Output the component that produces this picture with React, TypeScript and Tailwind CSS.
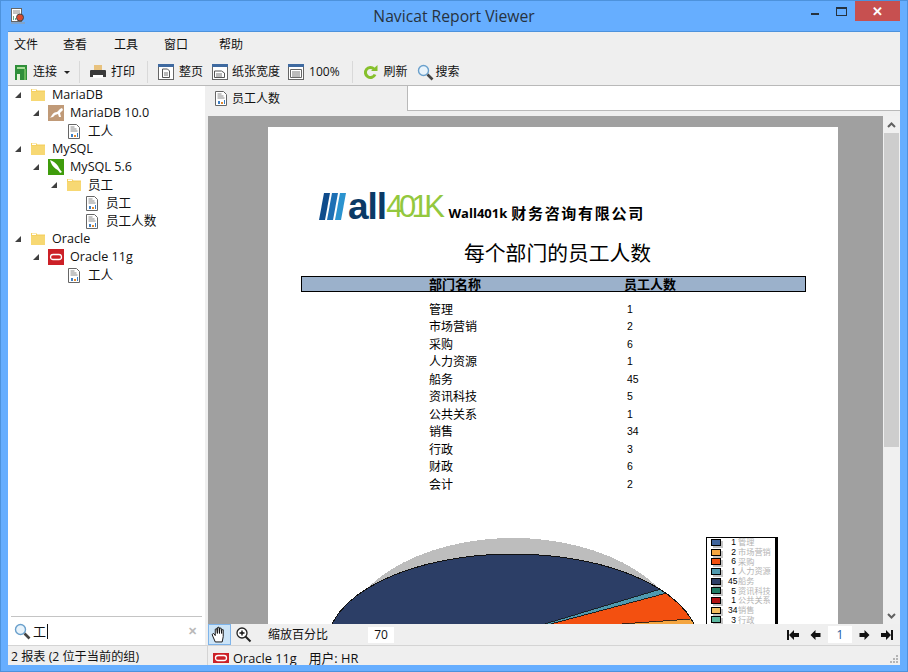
import React from "react";

const FONT = "[font-family:'Open_Sans','Noto_Sans_CJK_SC',sans-serif]";

type Kind = "folder" | "maria" | "mysql" | "oracle" | "report";

const tree: { label: string; level: number; kind: Kind; arrow?: boolean }[] = [
  { label: "MariaDB", level: 0, kind: "folder", arrow: true },
  { label: "MariaDB 10.0", level: 1, kind: "maria", arrow: true },
  { label: "工人", level: 2, kind: "report" },
  { label: "MySQL", level: 0, kind: "folder", arrow: true },
  { label: "MySQL 5.6", level: 1, kind: "mysql", arrow: true },
  { label: "员工", level: 2, kind: "folder", arrow: true },
  { label: "员工", level: 3, kind: "report" },
  { label: "员工人数", level: 3, kind: "report" },
  { label: "Oracle", level: 0, kind: "folder", arrow: true },
  { label: "Oracle 11g", level: 1, kind: "oracle", arrow: true },
  { label: "工人", level: 2, kind: "report" },
];

const rows = [
  ["管理", "1"],
  ["市场营销", "2"],
  ["采购", "6"],
  ["人力资源", "1"],
  ["船务", "45"],
  ["资讯科技", "5"],
  ["公共关系", "1"],
  ["销售", "34"],
  ["行政", "3"],
  ["财政", "6"],
  ["会计", "2"],
];

const legend = [
  ["bg-[#3f649c]", "1", "管理"],
  ["bg-[#f4a540]", "2", "市场营销"],
  ["bg-[#f35010]", "6", "采购"],
  ["bg-[#4f9ab0]", "1", "人力资源"],
  ["bg-[#2c3e66]", "45", "船务"],
  ["bg-[#1d7a62]", "5", "资讯科技"],
  ["bg-[#b01010]", "1", "公共关系"],
  ["bg-[#f3bd60]", "34", "销售"],
  ["bg-[#5cb8a0]", "3", "行政"],
];

function Folder() {
  return (
    <svg width="16" height="14" viewBox="0 0 16 14">
      <path d="M1 1h5l1.500 1.500H15V13H1z" fill="#f5d163" />
      <path d="M1 4h14v9H1z" fill="#f7d873" />
      <path d="M2 1.500h4v1.500H2z" fill="#fff" />
    </svg>
  );
}

function OracleIcon({ w = 16, h = 16 }: { w?: number; h?: number }) {
  return (
    <svg width={w} height={h} viewBox={`0 ${(16 - h) / 2} 16 ${h}`}>
      <rect width="16" height="16" fill="#cc2027" />
      <rect x="2.500" y="5.500" width="11" height="5" rx="2.500" fill="none" stroke="#fff" strokeWidth="1.300" />
    </svg>
  );
}

function Report() {
  return (
    <svg width="12" height="15" viewBox="0 0 12 15">
      <path d="M.5.500h8l3 3v11H.5z" fill="#fff" stroke="#666" />
      <path d="M2.500 3h4M2.500 5h6M2.500 7h7" stroke="#8a8a8a" />
      <path d="M3 10h2v3H3z" fill="#3d7ec4" />
      <path d="M6 11h2v2H6z" fill="#e38a2e" />
      <path d="M9 9h1v4H9z" fill="#3d7ec4" />
    </svg>
  );
}

function NodeIcon({ kind }: { kind: Kind }) {
  if (kind === "folder") return <Folder />;
  if (kind === "report") return <Report />;
  if (kind === "oracle") return <OracleIcon />;
  if (kind === "maria")
    return (
      <svg width="16" height="16" viewBox="0 0 16 16">
        <rect width="16" height="16" fill="#c09a78" />
        <path d="M0 13c2 0 3-1 4-3s3-3 5-3l3-3 2-1 1 2-2 2-1 1 1 4-2 0-1-3-3 1-2 2z" fill="#fff" />
      </svg>
    );
  return (
    <svg width="16" height="16" viewBox="0 0 16 16">
      <rect width="16" height="16" fill="#3f9c0c" />
      <path d="M2 1c3 1 6 3 8 6 1 2 2 4 4 6l-2 1c-1-2-2-3-4-4C5 8 3 5 2 1z" fill="#fff" />
    </svg>
  );
}

function Arrow() {
  return (
    <svg width="6" height="6" viewBox="0 0 6 6">
      <path d="M6 0v6H0z" fill="#404040" />
    </svg>
  );
}

function PageIcon({ mode }: { mode: "full" | "width" | "pct" }) {
  return (
    <svg width="16" height="16" viewBox="0 0 16 16">
      <rect x=".5" y=".5" width="15" height="15" fill="#fff" stroke="#666" />
      <rect width="16" height="3" fill="#3f6aa0" />
      {mode === "full" && <path d="M4.500 5h5l2 2v6.500h-7z" fill="#fff" stroke="#555" />}
      {mode === "full" && <path d="M6 9h4M6 11h4" stroke="#777" />}
      {mode === "width" && <path d="M2.500 7h7l3 2v4.500h-10z" fill="#fff" stroke="#555" />}
      {mode === "width" && <path d="M4 10h6M4 12h6" stroke="#777" />}
      {mode === "pct" && <path d="M2.500 5.500h11v8h-11z" fill="#fff" stroke="#666" />}
      {mode === "pct" && <path d="M4 8h8M4 10h8M4 12h8" stroke="#777" />}
    </svg>
  );
}

function Magnifier() {
  return (
    <svg width="17" height="17" viewBox="0 0 17 17">
      <circle cx="6.500" cy="6.500" r="5" fill="#e8f3fb" stroke="#6aa0cc" strokeWidth="1.400" />
      <path d="M10.500 10.500l5 5" stroke="#444" strokeWidth="2.600" />
    </svg>
  );
}

function Sep() {
  return <div className="mr-[10px] ml-[12px] h-[22px] w-px bg-[#d9d9d9]" />;
}

function Pie() {
  return (
    <svg width="400" height="88" viewBox="0 0 400 88" className="block" shapeRendering="crispEdges">
      <defs>
        <clipPath id="pie">
          <ellipse cx="195" cy="108" rx="186" ry="91" />
        </clipPath>
      </defs>
      <ellipse cx="195" cy="108" rx="172" ry="107" fill="#bdbdbd" />
      <g clipPath="url(#pie)" stroke="#111" strokeWidth=".8">
        <rect width="400" height="120" fill="#2c3e66" />
        <path d="M180 101L400 42V140H180z" fill="#f35010" />
        <path d="M180 101L343 52 349 56z" fill="#4f9ab0" />
        <path d="M180 96L400 80V140H180z" fill="#f4a540" />
      </g>
      <ellipse cx="195" cy="108" rx="186" ry="91" fill="none" stroke="#111" />
    </svg>
  );
}

export default function App() {
  return (
    <div className={`flex h-[672px] w-[908px] flex-col overflow-hidden border border-[#4d92dc] bg-[#66aeff] text-[12px] text-[#111] ${FONT}`}>
      {/* title bar */}
      <div className="flex h-[30px] shrink-0 items-start">
        <div className="mt-[7px] ml-[9px] h-4 w-4">
          <svg width="16" height="16" viewBox="0 0 16 16">
            <rect x="1.500" y=".5" width="10" height="13" fill="#fff" stroke="#666" />
            <path d="M3 3h7M3 5h7" stroke="#888" />
            <path d="M3 8h1v4H3zM5 10h1v2H5z" fill="#6a8" />
            <circle cx="10" cy="9.500" r="3.500" fill="#d84a30" stroke="#444" />
            <path d="M1 15h14" stroke="#999" />
          </svg>
        </div>
        <div className="mt-[4px] flex-1 pl-[71px] text-center text-[15.700px] leading-[22px] text-[#26323e]">
          Navicat Report Viewer
        </div>
        <div className="mr-[7px] flex items-start">
          <div className="mt-[12px] mr-[17px] h-[2px] w-[8px] bg-[#26323e]" />
          <div className="mt-[6px] mr-[8px] h-[9px] w-[11px] border border-t-2 border-[#26323e]" />
          <div className="flex h-[20px] w-[45px] items-center justify-center bg-[#c75050] text-[13px] font-bold leading-none text-white">
            ✕
          </div>
        </div>
      </div>

      <div className="mx-[7px] flex h-[634px] shrink-0 flex-col border-t border-[#4d92dc] bg-[#efefef]">
        {/* menu */}
        <div className="flex h-[25px] shrink-0 items-center">
          <span className="ml-[6px] w-[49px]">文件</span>
          <span className="w-[51px]">查看</span>
          <span className="w-[50px]">工具</span>
          <span className="w-[55px]">窗口</span>
          <span>帮助</span>
        </div>

        {/* toolbar */}
        <div className="flex h-[29px] shrink-0 items-center border-b border-[#b9b9b9] pt-[2px] pl-[7px]">
          <svg width="12" height="16" viewBox="0 0 12 16" className="mr-[6px]">
            <path d="M0 1h12v15H0z" fill="#2f8f3a" />
            <path d="M2 3h8v2H2z" fill="#a8dc98" />
            <path d="M2 10h3v6H2z" fill="#e4f4d8" />
            <path d="M9 5h2v11H9z" fill="#66b85a" />
          </svg>
          <span>连接</span>
          <span className="mr-[-3px] ml-[7px] h-0 w-0 border-x-[3px] border-t-[3px] border-x-transparent border-t-[#222]" />
          <Sep />
          <svg width="16" height="16" viewBox="0 0 16 16" className="mr-[5px]">
            <path d="M4 1h8v5H4z" fill="#e8c27e" />
            <path d="M0 7a1 1 0 011-1h14a1 1 0 011 1v6H0z" fill="#3a3a3a" />
            <path d="M3 11h10v3H3z" fill="#fff" />
          </svg>
          <span>打印</span>
          <Sep />
          <PageIcon mode="full" />
          <span className="mr-[9px] ml-[5px]">整页</span>
          <PageIcon mode="width" />
          <span className="mr-[8px] ml-[4px]">纸张宽度</span>
          <PageIcon mode="pct" />
          <span className="ml-[5px]">100%</span>
          <Sep />
          <svg width="15" height="15" viewBox="0 0 15 15" className="mr-[6px]">
            <path d="M12 9.500A5 5 0 1 1 11 4" fill="none" stroke="#86c02c" strokeWidth="3" />
            <path d="M8 6h6.500V0z" fill="#86c02c" />
          </svg>
          <span className="mr-[9px]">刷新</span>
          <Magnifier />
          <span className="ml-[2px]">搜索</span>
        </div>

        {/* main */}
        <div className="flex h-[559px] shrink-0">
          {/* left */}
          <div className="flex w-[197px] shrink-0 flex-col bg-white">
            <div className="h-[530px]">
              {tree.map((n, i) => (
                <div key={i} className="flex h-[18px] items-center">
                  <div style={{ width: 22 + n.level * 18 }} className="flex justify-end">
                    {n.arrow ? (
                      <div className="mr-[7px] flex w-[8px]">
                        <Arrow />
                      </div>
                    ) : null}
                  </div>
                  <div className="flex w-[16px] justify-center">
                    <NodeIcon kind={n.kind} />
                  </div>
                  <span className="ml-[6px] whitespace-nowrap text-[12.600px] leading-[18px]">{n.label}</span>
                </div>
              ))}
            </div>
            <div className="mx-[3px] h-px bg-[#c4c4c4]" />
            <div className="flex h-[28px] items-center pl-[6px]">
              <Magnifier />
              <span className="ml-[2px] border-r border-[#111] pr-[1px] text-[13px] leading-[15px]">工</span>
              <span className="mr-[8px] ml-auto text-[11px] font-bold text-[#b9b9b9]">✕</span>
            </div>
          </div>

          {/* right */}
          <div className="ml-[3px] flex w-[692px] flex-col">
            <div className="flex h-[25px] shrink-0 border-b border-[#b9b9b9] bg-white">
              <div className="flex h-[25px] w-[200px] items-center gap-[5px] border-r border-[#b9b9b9] bg-[#efefef] pl-[7px]">
                <Report />
                <span>员工人数</span>
              </div>
            </div>
            <div className="h-[5px] shrink-0" />
            {/* viewer */}
            <div className="flex h-[508px] shrink-0">
              <div className="flex-1 overflow-hidden bg-[#a0a0a0] px-[60px] pt-[11px]">
                <div className="h-[497px] w-[555px] min-w-[570px] overflow-hidden bg-white text-black">
                  <div className="flex h-[96px] items-end pl-[51px]">
                    <svg width="27" height="27" viewBox="0 0 27 27" className="mb-[3px]">
                      <path d="M5 0h6L6 27H0z" fill="#0f4c8c" />
                      <path d="M13 0h6l-5 27H8z" fill="#1d6fb4" />
                      <path d="M21 0h6l-5 27h-6z" fill="#2b93cf" />
                    </svg>
                    <span className="mb-[3px] ml-[2px] text-[37px] leading-[27px] font-bold tracking-[-1px] text-[#0b3a66] [font-family:'Liberation_Sans',sans-serif]">all</span>
                    <span className="mb-[3px] text-[31px] leading-[27px] tracking-[-4.500px] text-[#93c83e] [font-family:'Liberation_Sans',sans-serif]">401K</span>
                    <span className="mb-[1px] ml-[8px] text-[13px] leading-[18px] font-bold">Wall401k</span>
                    <span className="mb-[1px] ml-[4px] text-[15px] leading-[18px] font-semibold tracking-[1.700px]">财务咨询有限公司</span>
                  </div>
                  <div className="mt-[16px] pl-[196px] text-[20.800px] leading-[28px]">每个部门的员工人数</div>
                  <div className="mt-[9px] mr-[32px] ml-[33px] flex h-[16px] items-center border-[1.500px] border-black bg-[#9bb1cb] text-[13px] leading-none font-bold">
                    <span className="ml-[127px] w-[195px]">部门名称</span>
                    <span>员工人数</span>
                  </div>
                  <div className="mt-[9px]">
                    {rows.map(([name, n]) => (
                      <div key={name} className="flex h-[17.500px] items-center text-[12px]">
                        <span className="ml-[161px] w-[198px]">{name}</span>
                        <span className="text-[10.500px] [font-family:'Liberation_Sans',sans-serif]">{n}</span>
                      </div>
                    ))}
                  </div>
                  <div className="relative mt-[43px]">
                    <div className="pl-[50px]">
                      <Pie />
                    </div>
                    {/* legend overlays the chart corner */}
                    <div className="absolute top-0 left-[438px] h-[120px] w-[70px] border-[1.500px] border-black bg-white shadow-[2px_0_0_#000]">
                      {legend.map(([c, n, name]) => (
                        <div key={name} className="flex h-[9.700px] items-center text-[8.500px] leading-none">
                          <span className={`ml-[4px] h-[7px] w-[10px] border border-black shadow-[2px_2px_0_#c4c4c4] ${c}`} />
                          <span className="w-[7px]" />
                          <span className="w-[8px] text-right whitespace-nowrap [font-family:'Liberation_Sans',sans-serif]">{n}</span>
                          <span className="ml-[2px] whitespace-nowrap text-[8.200px] text-[#b4b4b4]">{name}</span>
                        </div>
                      ))}
                    </div>
                  </div>
                </div>
              </div>
              {/* scrollbar */}
              <div className="flex w-[17px] shrink-0 flex-col items-center bg-[#f0f0f0]">
                <div className="flex h-[17px] items-center justify-center">
                  <svg width="9" height="6" viewBox="0 0 9 6"><path d="M1 5l3.500-3.500L8 5" fill="none" stroke="#606060" strokeWidth="2" /></svg>
                </div>
                <div className="h-[314px] w-[15px] bg-[#cdcdcd]" />
                <div className="flex-1" />
                <div className="flex h-[17px] items-center justify-center">
                  <svg width="9" height="6" viewBox="0 0 9 6"><path d="M1 1l3.500 3.500L8 1" fill="none" stroke="#606060" strokeWidth="2" /></svg>
                </div>
              </div>
            </div>
            {/* view bar */}
            <div className="flex h-[21px] shrink-0 items-center">
              <div className="flex h-[21px] w-[23px] items-center justify-center border border-[#7eb4ea] bg-[#cce4f7]">
                <svg width="17" height="17" viewBox="0 0 16 16">
                  <path d="M4 15L1 8l1.500-1L4 9V3l1.500-.5L6 7V1.500L7.500 1 8 7V2l1.500 0L10 7V3.500l1.500 0V10l-1 5z" fill="#fff" stroke="#111" strokeWidth=".9" />
                </svg>
              </div>
              <div className="ml-[5px]">
                <svg width="16" height="16" viewBox="0 0 16 16">
                  <circle cx="6" cy="6" r="5" fill="#fff" stroke="#222" strokeWidth="1.300" />
                  <path d="M3.500 6h5M6 3.500v5" stroke="#111" strokeWidth="1.400" />
                  <path d="M9.500 9.500l5 5" stroke="#222" strokeWidth="2" />
                </svg>
              </div>
              <span className="ml-[16px]">缩放百分比</span>
              <div className="ml-[40px] h-[16px] w-[26px] bg-white text-center leading-[16px]">70</div>
              <div className="mr-[7px] ml-auto flex items-center text-black">
                <svg width="12" height="10" viewBox="0 0 12 10"><path d="M0 0h2v10H0zM2 5l5-5v3h5v4H7v3z" fill="#111" /></svg>
                <svg width="11" height="10" viewBox="0 0 10 10" className="ml-[11px]"><path d="M0 5l5-5v3h5v4H5v3z" fill="#111" /></svg>
                <div className="mx-[7px] h-[17px] w-[24px] bg-white text-center leading-[17px] text-[#1d5aa0]">1</div>
                <svg width="11" height="10" viewBox="0 0 10 10" className="mr-[11px]"><path d="M10 5L5 0v3H0v4h5v3z" fill="#111" /></svg>
                <svg width="12" height="10" viewBox="0 0 12 10"><path d="M12 0h-2v10h2zM10 5L5 0v3H0v4h5v3z" fill="#111" /></svg>
              </div>
            </div>
          </div>
        </div>

        {/* status */}
        <div className="flex h-[20px] shrink-0 items-center overflow-hidden border-t border-[#d4d4d4]">
          <span className="mt-[3px] ml-[3px] w-[196px] text-[12.200px]">2 报表 (2 位于当前的组)</span>
          <div className="h-[20px] w-px bg-[#d4d4d4]" />
          <div className="mt-[4px] ml-[5px]"><OracleIcon h={10} /></div>
          <span className="mt-[6px] ml-[4px] text-[12.800px]">Oracle 11g</span>
          <span className="mt-[6px] ml-[12px] text-[12.800px]">用户: HR</span>
          <div className="mt-[6px] mr-[2px] ml-auto grid grid-cols-3 gap-px">
            <span className="col-start-3 h-[2px] w-[2px] bg-[#b4b4b4]" />
            <span className="col-start-2 h-[2px] w-[2px] bg-[#b4b4b4]" />
            <span className="h-[2px] w-[2px] bg-[#b4b4b4]" />
            <span className="h-[2px] w-[2px] bg-[#b4b4b4]" />
            <span className="h-[2px] w-[2px] bg-[#b4b4b4]" />
            <span className="h-[2px] w-[2px] bg-[#b4b4b4]" />
          </div>
        </div>
      </div>
    </div>
  );
}
